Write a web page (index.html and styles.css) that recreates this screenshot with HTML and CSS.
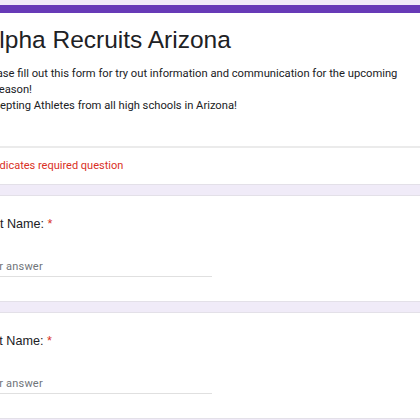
FILE: index.html
```html
<!DOCTYPE html>
<html lang="en">
<head>
<meta charset="utf-8">
<title>Alpha Recruits Arizona</title>
<link rel="stylesheet" href="styles.css">
</head>
<body>
<div class="form">
  <div class="card header-card">
    <div class="accent"></div>
    <div class="header-body">
      <h1 class="title">Alpha Recruits Arizona</h1>
      <div class="description">
        <span class="line">Please fill out this form for try out information and communication for the upcoming</span>
        <span class="line line-wrap">season!</span>
        <span class="line">Accepting Athletes from all high schools in Arizona!</span>
      </div>
    </div>
    <div class="required-note">* Indicates required question</div>
  </div>

  <div class="card question">
    <div class="q-title">First Name: <span class="req">*</span></div>
    <div class="answer">Your answer</div>
  </div>

  <div class="card question">
    <div class="q-title">Last Name: <span class="req">*</span></div>
    <div class="answer">Your answer</div>
  </div>
</div>
</body>
</html>
```

FILE: styles.css
```css
html, body {
  margin: 0;
  padding: 0;
}

body {
  background: #f0ebf8;
  overflow: hidden;
  height: 420px;
  font-family: Roboto, "Liberation Sans", Arial, sans-serif;
  color: #202124;
}

.form {
  width: 480px;
  margin: 5px 0 0 -36px;
}

.card {
  background: #ffffff;
  border: 1px solid #e3e0e8;
  border-radius: 6px;
  margin-bottom: 10px;
  overflow: hidden;
}

.header-card {
  border-top: none;
}

.accent {
  height: 8px;
  background: #673ab7;
}

.header-body {
  padding: 11px 18px 32px;
  border-bottom: 2px solid #ebebeb;
}

.title {
  margin: 0;
  font-family: "Liberation Sans", Arial, sans-serif;
  font-weight: 400;
  font-size: 24.5px;
  line-height: 32px;
  color: #202124;
}

.description {
  margin: 10px 0 0 -2px;
  font-size: 11.2px;
  line-height: 16px;
  color: #202124;
}

.line {
  display: block;
  white-space: nowrap;
}

.line-wrap {
  padding-left: 12px;
}

.required-note {
  padding: 10px 18px 10px;
  font-size: 11px;
  line-height: 16px;
  color: #d93025;
}

.question {
  padding: 19px 18px 24px;
}

.q-title {
  margin-left: -4px;
  font-family: "Liberation Sans", Arial, sans-serif;
  font-size: 12.6px;
  line-height: 18px;
  color: #202124;
}

.req {
  color: #d93025;
}

.answer {
  width: 232px;
  margin: 26px 0 0 -3px;
  padding-bottom: 1px;
  border-bottom: 1px solid #e0e0e0;
  font-size: 11px;
  line-height: 16px;
  letter-spacing: 0.2px;
  color: #70757a;
}
```
